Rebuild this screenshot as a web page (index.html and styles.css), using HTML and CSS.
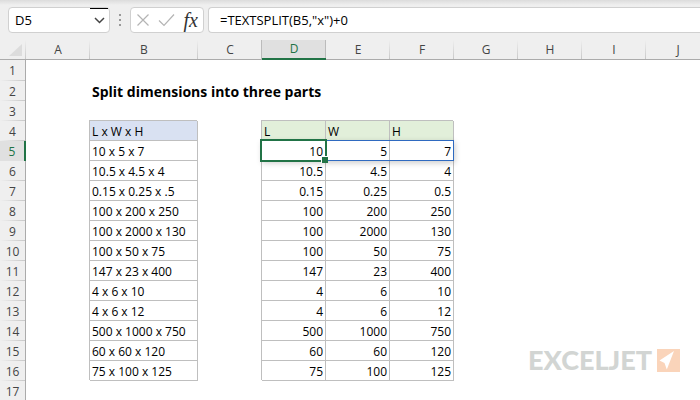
FILE: index.html
```html
<!DOCTYPE html>
<html lang="en">

<head>
    <meta charset="UTF-8">
    <meta name="viewport" content="width=device-width, initial-scale=1.0">
    <title>Split dimensions into three parts</title>
    <link rel="stylesheet" href="styles.css">
</head>

<body>
    <div class="formula-bar">
        <div class="name-box">
            <input type="text" class="name-input" aria-label="Name box" value="D5">
            <button type="button" class="name-open" aria-label="Open name list">
                <svg width="11" height="7" viewBox="0 0 11 7"><path d="M1 1l4.500 4.500L10 1" fill="none" stroke="#444" stroke-width="1.500"/></svg>
            </button>
        </div>
        <div class="dots"><i></i><i></i><i></i></div>
        <div class="tools">
            <button type="button" aria-label="Cancel">
                <svg width="14" height="14" viewBox="0 0 14 14"><path d="M1.500 1.500l11 11M12.500 1.500l-11 11" fill="none" stroke="#b4b4b4" stroke-width="1.200"/></svg>
            </button>
            <button type="button" aria-label="Enter">
                <svg width="17" height="14" viewBox="0 0 17 14"><path d="M1 7.500l5 5L16 1.500" fill="none" stroke="#b4b4b4" stroke-width="1.200"/></svg>
            </button>
            <button type="button" class="fx" aria-label="Insert function">fx</button>
        </div>
        <input type="text" class="formula" aria-label="Formula" value='=TEXTSPLIT(B5,"x")+0'>
    </div>

    <div class="sheet">
        <table class="grid">
            <colgroup>
                <col class="col-num">
                <col class="col">
                <col class="col-wide">
                <col class="col" span="8">
            </colgroup>
            <thead>
                <tr>
                    <th class="corner"><svg width="13" height="12" viewBox="0 0 13 12"><path d="M13 0v12H0z" fill="#dcdcdc"/></svg></th>
                    <th>A</th><th>B</th><th>C</th><th class="active">D</th><th>E</th><th>F</th><th>G</th><th>H</th><th>I</th><th>J</th>
                </tr>
            </thead>
            <tbody>
                <tr><th>1</th><td colspan="10"></td></tr>
                <tr><th>2</th><td></td><td class="title" colspan="9">Split dimensions into three parts</td></tr>
                <tr><th>3</th><td colspan="10"></td></tr>
                <tr><th>4</th><td></td><td class="box blue">L x W x H</td><td></td><td class="box green">L</td><td class="box green">W</td><td class="box green">H</td><td colspan="4"></td></tr>
                <tr><th class="active">5</th><td></td><td class="box">10 x 5 x 7</td><td></td><td class="box num picked">10<span class="spill"></span><span class="cursor"></span></td><td class="box num">5</td><td class="box num">7</td><td colspan="4"></td></tr>
                <tr><th>6</th><td></td><td class="box">10.5 x 4.5 x 4</td><td></td><td class="box num">10.5</td><td class="box num">4.5</td><td class="box num">4</td><td colspan="4"></td></tr>
                <tr><th>7</th><td></td><td class="box">0.15 x 0.25 x .5</td><td></td><td class="box num">0.15</td><td class="box num">0.25</td><td class="box num">0.5</td><td colspan="4"></td></tr>
                <tr><th>8</th><td></td><td class="box">100 x 200 x 250</td><td></td><td class="box num">100</td><td class="box num">200</td><td class="box num">250</td><td colspan="4"></td></tr>
                <tr><th>9</th><td></td><td class="box">100 x 2000 x 130</td><td></td><td class="box num">100</td><td class="box num">2000</td><td class="box num">130</td><td colspan="4"></td></tr>
                <tr><th>10</th><td></td><td class="box">100 x 50 x 75</td><td></td><td class="box num">100</td><td class="box num">50</td><td class="box num">75</td><td colspan="4"></td></tr>
                <tr><th>11</th><td></td><td class="box">147 x 23 x 400</td><td></td><td class="box num">147</td><td class="box num">23</td><td class="box num">400</td><td colspan="4"></td></tr>
                <tr><th>12</th><td></td><td class="box">4 x 6 x 10</td><td></td><td class="box num">4</td><td class="box num">6</td><td class="box num">10</td><td colspan="4"></td></tr>
                <tr><th>13</th><td></td><td class="box">4 x 6 x 12</td><td></td><td class="box num">4</td><td class="box num">6</td><td class="box num">12</td><td colspan="4"></td></tr>
                <tr><th>14</th><td></td><td class="box">500 x 1000 x 750</td><td></td><td class="box num">500</td><td class="box num">1000</td><td class="box num">750</td><td colspan="4"></td></tr>
                <tr><th>15</th><td></td><td class="box">60 x 60 x 120</td><td></td><td class="box num">60</td><td class="box num">60</td><td class="box num">120</td><td colspan="4"></td></tr>
                <tr><th>16</th><td></td><td class="box">75 x 100 x 125</td><td></td><td class="box num">75</td><td class="box num">100</td><td class="box num">125</td><td colspan="4"></td></tr>
                <tr><th>17</th><td colspan="10"></td></tr>
            </tbody>
        </table>
        <div class="logo">
            <span>EXCELJET</span>
            <svg width="23" height="23" viewBox="0 0 23 23"><path d="M0 0h23v23H0z" fill="#fad4ba"/><path d="M17 2L2.500 11.500l5 2.500 2.300 6.500z" fill="#fff"/></svg>
        </div>
    </div>
</body>

</html>
```
FILE: styles.css
```css
* {
    box-sizing: border-box;
}

body {
    margin: 0;
    height: 100vh;
    display: flex;
    flex-direction: column;
    overflow: hidden;
    background: #fff;
    font-family: "Open Sans", "Noto Sans", sans-serif;
    font-size: 13px;
    color: #000;
}

input,
button {
    font: inherit;
    border: 0;
    padding: 0;
    background: none;
    outline: none;
}

/* formula bar */
.formula-bar {
    flex: none;
    display: flex;
    height: 40px;
    padding: 7px 0;
    background: linear-gradient(#dcdcdc, #efefef 5px);
}

.name-box,
.tools,
.formula {
    height: 26px;
    background: #fff;
    border: 1px solid #d0d0d0;
    border-radius: 4px;
}

.name-box {
    display: flex;
    width: 102px;
    margin-left: 8px;
}

.name-input {
    flex: 1;
    min-width: 0;
    padding-left: 6px;
}

.name-open {
    width: 18px;
    margin-right: 1px;
    border-top: 1px solid #000;
}

.name-open svg {
    display: block;
    margin: 0 auto;
}

.dots {
    display: flex;
    flex-direction: column;
    align-items: center;
    justify-content: center;
    gap: 3px;
    width: 20px;
}

.dots i {
    width: 2px;
    height: 2px;
    background: #999;
}

.tools {
    display: flex;
    align-items: center;
    justify-content: space-between;
    width: 74px;
    padding: 0 5px;
}

.tools svg {
    display: block;
}

.fx {
    font-family: "Liberation Serif", serif;
    font-size: 20px;
    line-height: 20px;
    font-style: italic;
    color: #333;
}

.formula {
    flex: 1;
    min-width: 0;
    margin-left: 4px;
    padding-left: 11px;
    border-right: 0;
    border-radius: 4px 0 0 4px;
}

/* sheet */
.sheet {
    flex: 1;
    position: relative;
    overflow: hidden;
}

.grid {
    width: 710px;
    table-layout: fixed;
    border-collapse: separate;
    border-spacing: 0;
}

.col-num {
    width: 26px;
}

.col {
    width: 64px;
}

.col-wide {
    width: 108px;
}

.grid th,
.grid td {
    height: 20px;
    padding: 0;
    line-height: 19px;
    white-space: nowrap;
}

.grid th {
    font-size: 12px;
    font-weight: normal;
    color: #444;
    background: #efefef;
}

.grid thead th {
    line-height: 18px;
    background: linear-gradient(#efefef, #c8c8c8) right / 1px 100% no-repeat #efefef;
    border-bottom: 1px solid #ababab;
}

.grid thead .corner {
    padding-right: 4px;
}

.corner svg {
    display: block;
    margin-left: auto;
}

.grid tbody th {
    background: linear-gradient(to right, #efefef, #c8c8c8) bottom / 100% 1px no-repeat #efefef;
    border-right: 1px solid #ababab;
}

.grid tbody tr:first-child th {
    height: 21px;
}

.grid thead .active {
    color: #217346;
    background: #e0e0e0;
    border-bottom: 2px solid #217346;
    box-shadow: -1px 0 0 #bbb, inset -1px 0 0 #bbb;
}

.grid tbody .active {
    color: #217346;
    background: #e0e0e0;
    border-right: 2px solid #217346;
}

.grid td {
    text-align: left;
    padding-left: 2px;
}

.grid .title {
    font-size: 14px;
    font-weight: bold;
}

.grid .box {
    padding-top: 2px;
    font-size: 12px;
    line-height: 17px;
    border-right: 1px solid #bfbfbf;
    border-bottom: 1px solid #bfbfbf;
    box-shadow: -1px -1px 0 #bfbfbf;
}

.grid .num {
    text-align: right;
    padding-right: 2px;
}

.blue {
    background: #d9e1f2;
}

.green {
    background: #e2efda;
}

/* selected cell and the range it spills into */
.picked {
    position: relative;
}

.spill,
.cursor {
    position: absolute;
    top: -1px;
    left: -1px;
}

.spill {
    width: 193px;
    height: 21px;
    border: 1px solid #2f6ac0;
    box-shadow: 1px 2px 6px rgba(0, 0, 0, 0.2);
}

.cursor {
    width: 65px;
    height: 21px;
    outline: 1px solid #217346;
    border: 1px solid #217346;
}

.cursor::after {
    content: "";
    position: absolute;
    right: -3px;
    bottom: -3px;
    width: 6px;
    height: 6px;
    background: #217346;
    border: solid #fff;
    border-width: 1px 0 0 1px;
}

.logo {
    position: absolute;
    right: 20px;
    bottom: 22px;
    display: flex;
    align-items: center;
    gap: 5px;
    font-family: Lato, "Open Sans", sans-serif;
    font-size: 27px;
    line-height: 36px;
    font-weight: 900;
    color: #d2d5d3;
}
```
